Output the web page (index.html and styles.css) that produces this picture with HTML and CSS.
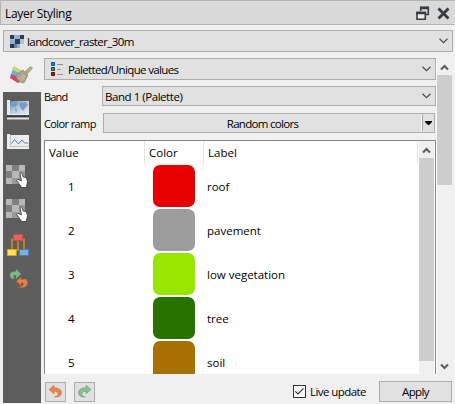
FILE: index.html
```html
<!DOCTYPE html>
<html lang="en">
<head>
<meta charset="utf-8">
<title>Layer Styling</title>
<link rel="stylesheet" href="styles.css">
</head>
<body>
<div class="panel">
  <header class="titlebar">
    <span class="t-title">Layer Styling</span>
    <svg class="float-icon" width="14" height="15" viewBox="0 0 14 15"><path d="M4.7 5V1.3h7.6v7.2H9.5" fill="none" stroke="#3a3d40" stroke-width="1.6"/><path d="M4 2h9" stroke="#3a3d40" stroke-width="2.5"/><path d="M1 6.5h8.3v6.8H1z" fill="#eee" stroke="#3a3d40" stroke-width="1.6"/><path d="M.2 7h9.9" stroke="#3a3d40" stroke-width="2.5"/></svg>
    <svg width="13" height="13" viewBox="0 0 13 13"><path d="M1.5 1.5l10 10M11.5 1.5l-10 10" stroke="#3a3d40" stroke-width="2.9"/></svg>
  </header>
  <div class="combo layer">
    <svg width="14" height="13" viewBox="0 0 14 13"><path d="M0 0h14v13H0z" fill="#a9bfd5"/><path d="M0 0h4v4H0zM10 0h4v4h-4zM5 4h5v5H5zM0 9h4v4H0z" fill="#293b50"/><path d="M4 0h6v4H4zM0 5h5v4H0zM5 9h5v4H5z" fill="#93aec9"/><path d="M4 9h3v4H4z" fill="#64819e"/><path d="M10 9h4v4h-4z" fill="#d7e3ee"/></svg>
    <span class="t-layer">landcover_raster_30m</span>
    <svg class="chev" width="9" height="6" viewBox="0 0 9 6"><path d="M.5 .8l4 3.8 4-3.8"/></svg>
  </div>
  <div class="body">
    <nav class="tabs">
      <div class="tab-active">
        <svg width="23" height="18" viewBox="0 0 23 18"><path d="M3 1l7 3 6 3-4 9-4 1-7-5z" fill="#98c978"/><path d="M4 0l7 4-2 4-6-4z" fill="#c5dc6c"/><path d="M3 4l6 3-2 4-6-3z" fill="#61b5e9"/><path d="M1 8l5 2 4 5-2 2-8-5z" fill="#df4171"/><path d="M7 8l6-4 5 5-4 8-3-.5L6 12z" fill="#aba58c" stroke="#857e6a" stroke-width=".6"/><path d="M9 13l5-4M11 15l4-5" stroke="#d6d1bc" stroke-width=".8"/><path d="M14.5 6l6-5.5 2 1.5-5.5 6.5z" fill="#b5ac88" stroke="#89815f" stroke-width=".5"/></svg>
      </div>
      <div class="tab-list">
        <svg width="22" height="20" viewBox="0 0 22 20"><defs><linearGradient id="sky" x2="1" y2="1"><stop stop-color="#6187b5"/><stop offset=".45" stop-color="#b7c9dd"/><stop offset="1" stop-color="#e6edf3"/></linearGradient></defs><path d="M0 0h3v14h19v1H0z" fill="#e9ecef"/><path d="M3 1h19v13H3z" fill="url(#sky)"/><path d="M4 4l4-2 3 2-3 3-3-1zM12 3l7-1 2 3-3 3-2 3-3-4zM8 8l2 1-1 4z" fill="#7c9bc0"/><path d="M0 16.3h22" stroke="#222b37" stroke-width="1.6" stroke-dasharray="1 .4"/><path d="M0 18.5h22" stroke="#dfe1e3" stroke-width="2"/></svg>
        <svg class="hist" width="22" height="15" viewBox="0 0 22 15"><path d="M0 0h3v1h19v14H0z" fill="#eceeee"/><path d="M3.5 1v11.5H22" fill="none" stroke="#bec3c7"/><path d="M4.5 9.5l3-4 4 4.5 3.5-4 3 3.5 1.5-1 2 1.5" fill="none" stroke="#607da4"/></svg>
        <svg class="trans" width="22" height="23" viewBox="0 0 22 23"><path d="M0 0h19v19H0z" fill="#999"/><path d="M0 0h6v6H0zM13 0h6v6h-6zM6 6h7v7H6zM0 13h6v6H0z" fill="#b7b7b7"/><path d="M6 0h7v6H6zM0 6h6v7H0z" fill="#808080"/><path d="M14 8.5c1-1 2-.5 2.3.5l.8 3 3.2.6 1.2 4-1.2 5.9h-4.6l-5-7 1.3-1.3 3.5 1.8z" fill="#fff" stroke="#333" stroke-width=".8"/></svg>
        <svg class="trans2" width="22" height="23" viewBox="0 0 22 23"><path d="M0 0h19v19H0z" fill="#999"/><path d="M0 0h6v6H0zM13 0h6v6h-6zM6 6h7v7H6zM0 13h6v6H0z" fill="#b7b7b7"/><path d="M6 0h7v6H6zM0 6h6v7H0z" fill="#808080"/><path d="M14 8.5c1-1 2-.5 2.3.5l.8 3 3.2.6 1.2 4-1.2 5.9h-4.6l-5-7 1.3-1.3 3.5 1.8z" fill="#fff" stroke="#333" stroke-width=".8"/></svg>
        <svg class="tree-icon" width="22" height="22" viewBox="0 0 22 22"><path d="M7 5.5H5V16M15 5.5h2V16M11 6v10H5M11 16h6" fill="none" stroke="#c38324" stroke-width="1.9"/><path d="M6.5.5h9v6h-9z" fill="#e85f64" stroke="#c94b4d"/><path d="M.5 15.5h8.7v6H.5z" fill="#fce457" stroke="#d7a72b"/><path d="M12.5 15.5h9v6h-9z" fill="#77afe9" stroke="#467fb5"/></svg>
        <svg class="history" width="20" height="20" viewBox="0 0 20 20"><path d="M3 10C-1.5 6 2 1.5 7 2.6V0l5 5-5 5V6.4C4.5 5.7 3.6 7.3 5.5 9.5z" fill="#80b68c" stroke="#579166" stroke-width=".5"/><path d="M17 10c4 5-.5 9.6-5.5 8.6L9 18c3.5 0 6-1.5 5.5-3.2-.4-1-1.5-1.3-2.5-1.2v3l-4.5-4.4L12 8v2.6c2-.5 4-.4 5-.6z" fill="#e88145" stroke="#be602b" stroke-width=".5"/></svg>
      </div>
    </nav>
    <main class="content">
      <div class="scrollarea">
        <div class="form">
          <div class="combo renderer">
            <svg width="13" height="14" viewBox="0 0 13 14"><path d="M.5.5h3v3h-3z" fill="#2588f2" stroke="#124b9a"/><path d="M.5 5.5h3v3h-3z" fill="#18a466" stroke="#075238"/><path d="M.5 10.5h3v3h-3z" fill="#b51e16" stroke="#6b0808"/><path d="M6 2.5h6M6 7.5h4M6 12.5h6" stroke="#929292"/></svg>
            <span class="t-renderer">Paletted/Unique values</span>
            <svg class="chev" width="9" height="6" viewBox="0 0 9 6"><path d="M.5 .8l4 3.8 4-3.8"/></svg>
          </div>
          <div class="row band-row"><label class="t-band">Band</label>
            <div class="combo band"><span class="t-palette">Band 1 (Palette)</span><svg class="chev" width="9" height="6" viewBox="0 0 9 6"><path d="M.5 .8l4 3.8 4-3.8"/></svg></div>
          </div>
          <div class="row ramp-row"><label class="t-ramp">Color ramp</label>
            <div class="ramp"><span class="ramp-name"><span class="t-random">Random colors</span></span><span class="ramp-menu"><svg width="7" height="4" viewBox="0 0 7 4"><path d="M0 0h7v1L4 4H3L0 1z"/></svg></span></div>
          </div>
          <div class="table">
            <div class="cells">
              <div class="thead"><span class="c1"><span class="t-value">Value</span></span><span class="c2"><span class="t-color">Color</span></span><span class="c3"><span class="t-label">Label</span></span></div>
              <div class="item"><span class="num">1</span><i class="swatch red"></i><span>roof</span></div>
              <div class="item"><span class="num">2</span><i class="swatch gray"></i><span>pavement</span></div>
              <div class="item"><span class="num">3</span><i class="swatch lime"></i><span>low vegetation</span></div>
              <div class="item"><span class="num">4</span><i class="swatch green"></i><span>tree</span></div>
              <div class="item"><span class="num">5</span><i class="swatch brown"></i><span>soil</span></div>
            </div>
            <div class="scroll inner"><svg class="arrow" width="9" height="7" viewBox="0 0 9 7"><path d="M1 5.5L4.5 2 8 5.5"/></svg><i class="thumb"></i></div>
          </div>
        </div>
        <div class="scroll outer"><svg class="arrow" width="9" height="7" viewBox="0 0 9 7"><path d="M1 5.5L4.5 2 8 5.5"/></svg><i class="thumb"></i><svg class="arrow down" width="9" height="7" viewBox="0 0 9 7"><path d="M1 1.5L4.5 5 8 1.5"/></svg></div>
      </div>
      <footer class="footer">
        <button class="tool" aria-label="Undo"><svg width="13" height="13" viewBox="0 0 13 13"><path d="M0 4.5L5 0v2.8c5-.2 8 2.2 7.3 5.6C12 11 9.5 12.5 5.5 12c3-1 4.4-2.4 3.3-4C8 6.8 7 6.4 5 6.5V9z" fill="#e88449" stroke="#cc6f37" stroke-width=".5"/></svg></button>
        <button class="tool redo" aria-label="Redo"><svg width="13" height="13" viewBox="0 0 13 13"><path d="M13 4.5L8 0v2.8C3 2.6 0 5 .7 8.4 1 11 3.5 12.5 7.5 12c-3-1-4.4-2.4-3.3-4C5 6.8 6 6.4 8 6.5V9z" fill="#8abd93" stroke="#5d966c" stroke-width=".5"/></svg></button>
        <span class="check"><svg width="11" height="11" viewBox="0 0 11 11"><path d="M1.3 5.3L4 8l5.5-5.7" fill="none" stroke="#333" stroke-width="1.2"/></svg></span>
        <span class="t-live">Live update</span>
        <button class="apply"><span class="t-apply">Apply</span></button>
      </footer>
    </main>
  </div>
</div>
</body>
</html>
```
FILE: styles.css
```css
* { box-sizing: border-box; }
body { margin: 0; background: #f0f0f0; color: #000; font: 11.5px/16px "Open Sans", "Noto Sans", sans-serif; overflow: hidden; }
svg { display: block; flex: none; }
span, label { white-space: nowrap; }
button { font: inherit; color: inherit; padding: 0; border: 1px solid #adadad; background: #e1e1e1; border-radius: 0; }
.panel { width: 455px; height: 404px; display: flex; flex-direction: column; }
.titlebar { height: 25px; background: #dadada; border-top: 1px solid #b5b5b5; border-bottom: 1px solid #b5b5b5; border-left: 1px solid #b5b5b5; display: flex; align-items: center; padding: 2px 5px 0 4px; font-size: 12px; }
.t-title { letter-spacing: -.32px; }
.t-layer { letter-spacing: -.58px; }
.t-renderer { letter-spacing: -.64px; }
.t-palette { letter-spacing: -.45px; }
.t-band { font-size: 11px; letter-spacing: -.8px; }
.t-ramp { font-size: 11px; letter-spacing: -.6px; }
.t-random { letter-spacing: -.7px; }
.t-live { letter-spacing: -.56px; }
.t-apply { letter-spacing: -.6px; }
.float-icon { margin-left: auto; margin-right: 7px; }
.combo { display: flex; align-items: center; background: #e1e1e1; border: 1px solid #adadad; }
.chev { margin-left: auto; fill: none; stroke: #4c4c4c; stroke-width: 1.2; }
.layer { height: 22px; margin: 5px 2px 0 3px; padding: 0 4px 0 6px; gap: 3px; }
.layer span { padding-top: 1px; }
.body { display: flex; flex: 1; margin: 6px 2px 0 3px; min-height: 0; }
.tabs { width: 38px; display: flex; flex-direction: column; }
.tab-active { height: 34px; padding: 8px 0 0 7px; }
.tab-list { height: 311px; background: #5d5d5d; padding: 8px 0 0 3px; }
.tab-list svg { margin-left: 1px; }
.tab-list .hist { margin-top: 14px; }
.tab-list .trans { margin: 16px 0 0; }
.tab-list .trans2 { margin: 11px 0 0; }
.tab-list .tree-icon { margin-top: 12px; }
.tab-list .history { margin: 13px 0 0 3px; }
.content { flex: 1; padding-left: 3px; }
.scrollarea { height: 316px; display: flex; overflow: hidden; }
.form { width: 392px; display: flex; flex-direction: column; }
.renderer { height: 22px; padding: 0 4px 0 6px; gap: 4px; flex: none; }
.renderer span { padding-top: 2px; }
.row { display: flex; align-items: center; height: 20px; flex: none; }
.row label { padding-top: 2px; }
.band-row { margin-top: 6px; }
.band { width: 334px; height: 20px; padding: 0 4px 0 2px; margin-left: auto; }
.band span { padding-top: 1px; }
.ramp-row { margin-top: 7px; padding-right: 1px; }
.ramp { width: 332px; height: 20px; margin-left: auto; border: 1px solid #adadad; background: #e1e1e1; display: flex; padding: 1px 0; }
.ramp-name { flex: 1; display: flex; justify-content: center; align-items: center; border-right: 1px solid #fff; padding: 2px 0 0; }
.ramp-menu { width: 12px; border-left: 1px solid #a0a0a0; display: grid; place-items: center; }
.table { flex: 1; min-height: 0; margin-top: 7px; border: 1px solid #828790; border-bottom: 0; background: #fff; display: flex; overflow: hidden; }
.cells { width: 374px; overflow: hidden; }
.thead { display: flex; height: 23px; width: 373px; }
.thead > span { border-right: 1px solid #e5e5e5; padding-top: 4px; }
.c1 { width: 100px; padding-left: 4px; }
.c2 { width: 59px; padding-left: 4px; }
.c3 { flex: 1; padding-left: 4px; }
.item { height: 44px; display: grid; grid-template-columns: 108px 54px 1fr; align-items: center; }
.num { padding-left: 23px; padding-top: 1px; }
.item > span:last-child { padding-top: 1px; }
.swatch { width: 42px; height: 42px; border-radius: 7px; }
.red { background: #e60000; }
.gray { background: #9c9c9c; }
.lime { background: #98e600; }
.green { background: #267300; }
.brown { background: #a87000; }
.scroll { display: flex; flex-direction: column; align-items: center; background: #f0f0f0; }
.scroll .thumb { width: 100%; background: #cdcdcd; flex: none; }
.arrow { fill: none; stroke: #606060; stroke-width: 2.2; }
.inner { width: 15px; padding-top: 6px; margin-right: 1px; }
.inner .thumb { height: 203px; margin-top: 4px; }
.outer { width: 16px; padding-top: 6px; border-left: 1px solid #fff; }
.outer .thumb { height: 110px; margin-top: 4px; }
.down { margin-top: auto; margin-bottom: 4px; }
.footer { display: flex; align-items: center; height: 21px; margin-top: 7px; padding-left: 1px; padding-right: 1px; }
.tool { width: 21px; height: 20px; display: grid; place-items: center; }
.redo { margin-left: 8px; }
.check { width: 13px; height: 13px; border: 1px solid #333; background: #fff; margin-left: 198px; margin-right: 4px; }
.apply { width: 73px; height: 21px; margin-left: auto; }
```
